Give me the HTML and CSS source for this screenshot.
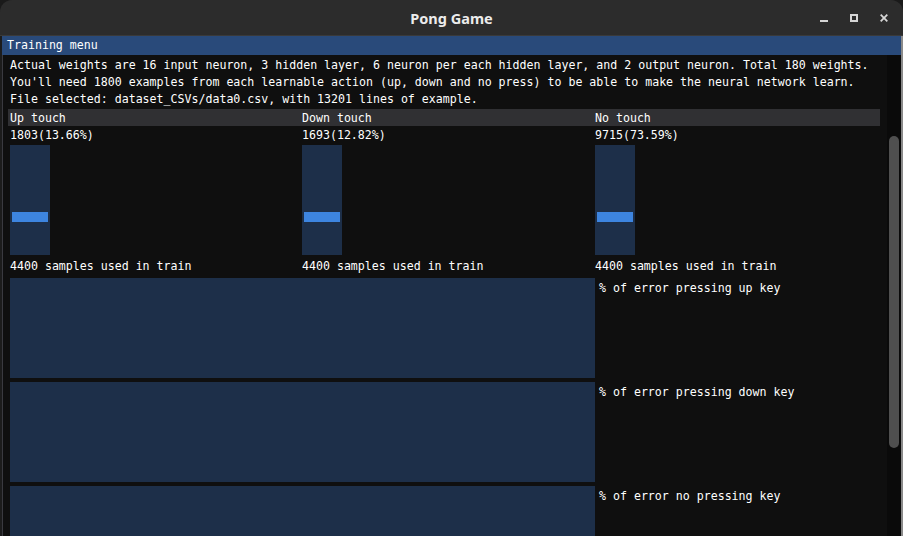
FILE: index.html
```html
<!DOCTYPE html>
<html>
<head>
<meta charset="utf-8">
<link rel="stylesheet" href="styles.css">
</head>
<body>
<div class="screen">
  <header class="titlebar">
    <div class="tb-spacer"></div>
    <div class="tb-title">Pong Game</div>
    <div class="tb-controls">
      <svg class="tb-icon" width="8" height="8" viewBox="0 0 8 8"><rect x="0" y="6" width="8" height="2" fill="#d6d6d6"/></svg>
      <svg class="tb-icon" width="8" height="8" viewBox="0 0 8 8"><rect x="1" y="1" width="6" height="6" fill="none" stroke="#d6d6d6" stroke-width="2"/></svg>
      <svg class="tb-icon" width="8" height="8" viewBox="0 0 8 8"><path d="M0.7 0.7 L7.3 7.3 M7.3 0.7 L0.7 7.3" stroke="#d6d6d6" stroke-width="1.8" fill="none"/></svg>
    </div>
  </header>
  <div class="frame">
    <div class="imgui">
      <div class="im-title">Training menu</div>
      <div class="im-body">
        <div class="content">
          <div class="line">Actual weights are 16 input neuron, 3 hidden layer, 6 neuron per each hidden layer, and 2 output neuron. Total 180 weights.</div>
          <div class="line gap4">You'll need 1800 examples from each learnable action (up, down and no press) to be able to make the neural network learn.</div>
          <div class="line gap4">File selected: dataset_CSVs/data0.csv, with 13201 lines of example.</div>

          <div class="table">
            <div class="thead">
              <div class="th">Up touch</div>
              <div class="th">Down touch</div>
              <div class="th">No touch</div>
            </div>
            <div class="tbody">
              <div class="td">
                <div class="line">1803(13.66%)</div>
                <div class="vslider"><div class="vgrab"></div></div>
                <div class="line samples">4400 samples used in train</div>
              </div>
              <div class="td">
                <div class="line">1693(12.82%)</div>
                <div class="vslider"><div class="vgrab"></div></div>
                <div class="line samples">4400 samples used in train</div>
              </div>
              <div class="td">
                <div class="line">9715(73.59%)</div>
                <div class="vslider"><div class="vgrab"></div></div>
                <div class="line samples">4400 samples used in train</div>
              </div>
            </div>
          </div>

          <div class="plots">
            <div class="plot-row">
              <div class="plot-frame"></div>
              <div class="plot-label">% of error pressing up key</div>
            </div>
            <div class="plot-row">
              <div class="plot-frame"></div>
              <div class="plot-label">% of error pressing down key</div>
            </div>
            <div class="plot-row">
              <div class="plot-frame"></div>
              <div class="plot-label">% of error no pressing key</div>
            </div>
          </div>
        </div>
        <div class="scrollbar"><div class="sgrab"></div></div>
      </div>
    </div>
  </div>
</div>
</body>
</html>
```

FILE: styles.css
```css
html, body {
  margin: 0;
  padding: 0;
  background: #1a1a1a;
}

.screen {
  width: 903px;
  height: 536px;
  display: flex;
  flex-direction: column;
  overflow: hidden;
}

.titlebar {
  height: 35px;
  flex: 0 0 35px;
  background: #2c2c2c;
  border-bottom: 1px solid #3a3a3a;
  border-radius: 12px 12px 0 0;
  display: grid;
  grid-template-columns: 1fr auto 1fr;
  align-items: center;
}

.tb-title {
  font-family: "Noto Sans", "DejaVu Sans", sans-serif;
  font-weight: bold;
  font-size: 14.5px;
  color: #ececec;
  padding-top: 1px;
}

.tb-controls {
  display: flex;
  justify-content: flex-end;
  align-items: center;
  gap: 22px;
  padding-right: 15px;
}

.tb-icon {
  display: block;
}

.frame {
  flex: 1;
  display: flex;
  background: #1c1c1c;
  padding-left: 2px;
  min-height: 0;
}

.imgui {
  flex: 1;
  display: flex;
  flex-direction: column;
  background: #0f0f0f;
  border-left: 1px solid #3a3a40;
  border-right: 2px solid #8a8a8a;
  min-height: 0;
  font-family: "DejaVu Sans Mono", "Liberation Mono", monospace;
  font-size: 11.6px;
  color: #ffffff;
}

.im-title {
  height: 13px;
  line-height: 13px;
  padding: 3px 0 3px 5px;
  margin-left: -1px;
  background: #294a7a;
  white-space: pre;
}

.im-body {
  flex: 1;
  display: flex;
  min-height: 0;
}

.content {
  flex: 1;
  padding: 4px 7px 0 7px;
  overflow: hidden;
}

.line {
  height: 13px;
  line-height: 13px;
  white-space: pre;
}

.gap4 {
  margin-top: 4px;
}

.table {
  margin-top: 3px;
  margin-left: -2px;
}

.thead,
.tbody {
  display: grid;
  grid-template-columns: 292px 293px 1fr;
}

.thead {
  background: #303033;
  height: 17px;
}

.th {
  padding: 3px 0 0 2px;
  height: 13px;
  line-height: 13px;
  white-space: pre;
}

.td {
  padding: 3px 0 0 2px;
  display: flex;
  flex-direction: column;
  align-items: flex-start;
}

.vslider {
  margin-top: 3px;
  width: 40px;
  height: 110px;
  background: #1d2f49;
  display: flex;
  flex-direction: column;
  align-items: center;
  padding-top: 67px;
  box-sizing: border-box;
}

.vgrab {
  width: 36px;
  height: 10px;
  background: #3d85e0;
}

.samples {
  margin-top: 5px;
}

.plots {
  margin-top: 5px;
  display: flex;
  flex-direction: column;
  gap: 4px;
}

.plot-row {
  display: flex;
  gap: 4px;
}

.plot-frame {
  width: 585px;
  height: 100px;
  background: #1d2f49;
}

.plot-label {
  padding-top: 4px;
  height: 13px;
  line-height: 13px;
  white-space: pre;
}

.scrollbar {
  width: 14px;
  flex: 0 0 14px;
  background: #0a0a0a;
  padding: 81px 1px 0 2px;
  box-sizing: border-box;
}

.sgrab {
  width: 10px;
  height: 312px;
  background: #4f4f4f;
  border-radius: 5px;
}
```
